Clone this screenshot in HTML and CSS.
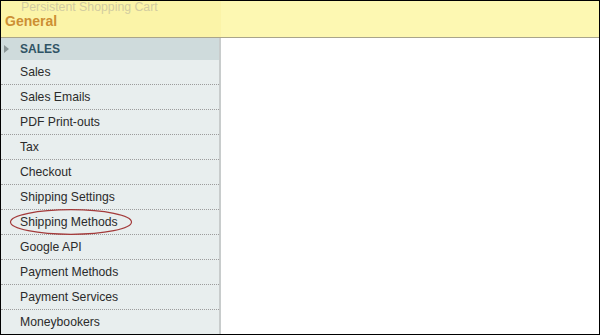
FILE: index.html
```html
<!DOCTYPE html>
<html>
<head>
<meta charset="utf-8">
<link rel="stylesheet" href="styles.css">
</head>
<body>
<div class="frame">
  <div class="header">
    <div class="header-left">
      <div class="crumb">Persistent Shopping Cart</div>
      <div class="title">General</div>
    </div>
    <div class="header-right"></div>
  </div>
  <div class="content">
    <div class="sidebar">
      <div class="section-title"><span class="arrow"></span><span>SALES</span></div>
      <ul class="menu">
        <li>Sales</li>
        <li>Sales Emails</li>
        <li>PDF Print-outs</li>
        <li>Tax</li>
        <li>Checkout</li>
        <li>Shipping Settings</li>
        <li class="circled">Shipping Methods<svg class="ring" width="124" height="28" viewBox="0 0 124 28"><ellipse cx="62" cy="14" rx="60.5" ry="12.3" fill="none" stroke="#a33a3a" stroke-width="1.2"/></svg></li>
        <li>Google API</li>
        <li>Payment Methods</li>
        <li>Payment Services</li>
        <li>Moneybookers</li>
      </ul>
    </div>
    <div class="main"></div>
  </div>
</div>
</body>
</html>
```
FILE: styles.css
```css
html, body {
  margin: 0;
  padding: 0;
  background: #fff;
}
.frame {
  width: 600px;
  height: 335px;
  box-sizing: border-box;
  border: 1px solid #000;
  overflow: hidden;
  display: flex;
  flex-direction: column;
  font-family: "Liberation Sans", Arial, sans-serif;
}
.header {
  height: 36px;
  flex: none;
  display: flex;
  border-bottom: 1px solid #a9a58b;
}
.header-left {
  width: 220px;
  background: #fbf4a8;
  overflow: hidden;
}
.header-right {
  flex: 1;
  background: #fdf8b2;
}
.crumb {
  font-size: 12.3px;
  line-height: 13px;
  color: #d2cca0;
  padding-left: 20px;
  white-space: nowrap;
}
.title {
  font-size: 14px;
  font-weight: bold;
  line-height: 14px;
  color: #cd8f34;
  padding-left: 4px;
}
.content {
  flex: 1;
  display: flex;
  min-height: 0;
}
.sidebar {
  width: 218px;
  flex: none;
  background: #e8eeee;
  border-right: 2px solid #c8cccc;
}
.section-title {
  height: 22px;
  background: #cfdbdc;
  display: flex;
  align-items: center;
  font-size: 12px;
  font-weight: bold;
  color: #2f5465;
}
.arrow {
  width: 0;
  height: 0;
  border-top: 4px solid transparent;
  border-bottom: 4px solid transparent;
  border-left: 5px solid #8a9596;
  margin-left: 3px;
  margin-right: 11px;
}
.menu {
  list-style: none;
  margin: 0;
  padding: 0;
}
.menu li {
  height: 24px;
  line-height: 25px;
  padding-left: 19px;
  font-size: 12.2px;
  color: #2b2b2b;
  border-bottom: 1px dotted #9c9c9c;
  position: relative;
  white-space: nowrap;
}
.ring {
  position: absolute;
  left: 8px;
  top: -2px;
}
.main {
  flex: 1;
  background: #fff;
}
```
